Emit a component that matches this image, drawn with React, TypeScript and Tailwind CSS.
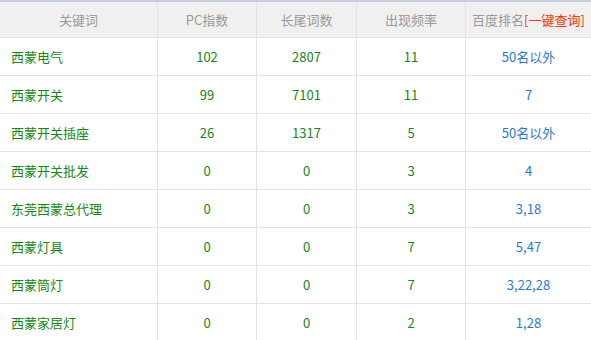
import React from 'react';

const rows = [
  { kw: '西蒙电气', pc: '102', tail: '2807', freq: '11', rank: '50名以外' },
  { kw: '西蒙开关', pc: '99', tail: '7101', freq: '11', rank: '7' },
  { kw: '西蒙开关插座', pc: '26', tail: '1317', freq: '5', rank: '50名以外' },
  { kw: '西蒙开关批发', pc: '0', tail: '0', freq: '3', rank: '4' },
  { kw: '东莞西蒙总代理', pc: '0', tail: '0', freq: '3', rank: '3,18' },
  { kw: '西蒙灯具', pc: '0', tail: '0', freq: '7', rank: '5,47' },
  { kw: '西蒙筒灯', pc: '0', tail: '0', freq: '7', rank: '3,22,28' },
  { kw: '西蒙家居灯', pc: '0', tail: '0', freq: '2', rank: '1,28' },
];

const cols = 'grid grid-cols-[158px_99px_100px_109px_125px]';

export default function App() {
  return (
    <div
      className="w-[591px] h-[340px] overflow-hidden bg-white text-[13px]"
      style={{ fontFamily: '"Noto Sans CJK SC", "Noto Sans", sans-serif' }}
    >
      <div className="border-t-2 border-[#c9cde2]">
        {/* header */}
        <div className={`${cols} h-[36px] bg-[#f0f0f0] text-[#999] border-b border-[#e3e3e3]`}>
          <div className="flex items-center justify-center border-r border-[#e3e3e3]">关键词</div>
          <div className="flex items-center justify-center border-r border-[#e3e3e3]">PC指数</div>
          <div className="flex items-center justify-center border-r border-[#e3e3e3]">长尾词数</div>
          <div className="flex items-center justify-center border-r border-[#e3e3e3]">出现频率</div>
          <div className="flex items-center justify-center">
            百度排名<span className="text-[#ff3300]">[一键查询]</span>
          </div>
        </div>

        {rows.map((r) => (
          <div key={r.kw} className={`${cols} h-[38px] border-b border-[#e3e3e3] text-[#138a13]`}>
            <div className="flex items-center pl-[11px] border-r border-[#e3e3e3]">{r.kw}</div>
            <div className="flex items-center justify-center border-r border-[#e3e3e3]">{r.pc}</div>
            <div className="flex items-center justify-center border-r border-[#e3e3e3]">{r.tail}</div>
            <div className="flex items-center justify-center border-r border-[#e3e3e3]">{r.freq}</div>
            <div className="flex items-center justify-center text-[#1f7ad8]">{r.rank}</div>
          </div>
        ))}
      </div>
    </div>
  );
}
